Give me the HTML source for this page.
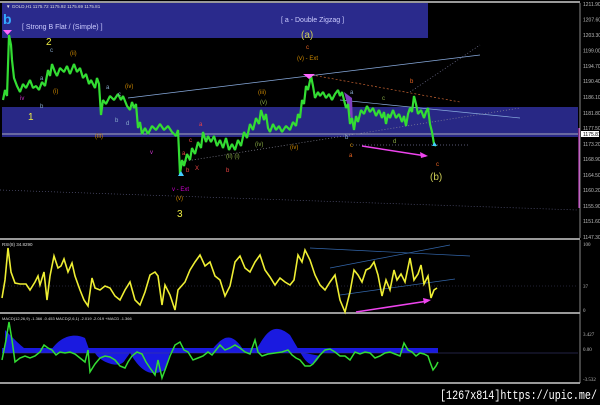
<!DOCTYPE html>
<html><head><meta charset="utf-8"><style>
html,body{margin:0;padding:0;background:#000;width:600px;height:405px;overflow:hidden}
svg{display:block}
text{font-family:"Liberation Sans",sans-serif}
.ax{font-family:"Liberation Serif",serif;font-size:5px;fill:#bbb}
</style></head><body>
<svg width="600" height="405" viewBox="0 0 600 405">
<rect width="600" height="405" fill="#000"/>
<rect x="0" y="1" width="580" height="2" fill="#999"/>
<line x1="580" y1="3" x2="580" y2="238" stroke="#aaa" stroke-width="0.8"/>
<rect x="2" y="3" width="426" height="35" fill="#2a2a8c"/>
<rect x="2" y="107" width="576" height="30" fill="#2a2a8c" opacity="0.95"/>
<line x1="2" y1="134" x2="578" y2="134" stroke="#aab" stroke-width="1"/>
<text x="6" y="8" fill="#ddd" font-size="4.5">▼ GOLD,H1  1175.72 1175.92 1175.69 1175.81</text>
<text x="3" y="24" fill="#3af" font-size="14" font-weight="bold">b</text>
<text x="22" y="29" fill="#ccf" font-size="7">[ Strong B Flat / (Simple) ]</text>
<text x="281" y="22" fill="#ccf" font-size="7">[ a - Double Zigzag ]</text>
<g stroke-width="0.7" fill="none">
<line x1="128" y1="98" x2="480" y2="55" stroke="#8ad"/>
<line x1="312" y1="75" x2="460" y2="102" stroke="#c63" stroke-dasharray="2,2"/>
<line x1="340" y1="100" x2="520" y2="118" stroke="#8ad"/>
<line x1="180" y1="162" x2="520" y2="108" stroke="#889" stroke-dasharray="1,2"/>
<line x1="0" y1="190" x2="578" y2="210" stroke="#557" stroke-dasharray="1,2"/>
<line x1="410" y1="92" x2="480" y2="45" stroke="#779" stroke-dasharray="1,2"/>
<line x1="350" y1="145" x2="470" y2="145" stroke="#779" stroke-dasharray="1,2"/>
</g>
<polygon points="344,92 352,98 353,125" fill="#8040c0"/>
<polyline fill="none" stroke="#3d3" stroke-width="2.2" stroke-linejoin="bevel" points="3,100 5,90 7,96 9,35 11,45 12,60 14,78 17,86 20,92 23,84 26,88 30,80 33,88 36,86 39,90 42,82 45,86 48,70 50,76 52,64 55,72 57,76 60,68 64,72 67,66 70,74 74,64 77,72 80,68 83,78 86,74 89,84 91,80 95,88 97,78 99,84 101,115 103,100 106,104 110,96 114,100 118,94 121,100 123,96 127,106 130,110 132,102 134,108 136,104 138,128 140,122 142,134 145,128 148,134 152,126 156,130 160,124 164,130 168,126 172,132 176,136 178,130 180,174 182,160 184,166 187,154 190,160 192,148 195,154 198,142 201,148 203,132 206,142 208,136 211,142 214,136 217,146 220,140 223,148 226,138 229,150 232,144 235,150 238,140 241,146 244,132 247,138 250,124 253,130 256,118 259,124 261,110 264,120 266,114 268,128 270,132 273,124 276,130 279,126 282,132 286,126 290,130 293,122 296,126 298,114 300,118 302,100 304,104 306,86 308,90 311,76 313,86 315,98 318,92 320,96 323,92 326,98 329,94 332,100 335,94 338,90 340,96 342,92 344,100 346,108 348,104 350,124 352,118 354,130 356,116 358,122 361,110 364,114 367,106 370,112 373,108 376,116 379,110 382,118 384,112 386,124 388,114 390,118 393,110 396,118 399,114 402,122 404,116 406,126 408,114 410,108 412,112 414,96 416,104 418,114 421,110 424,118 426,112 428,108 430,124 432,132 434,144 436,146"/>
<polygon points="432,146 437,146 434.5,142" fill="#4cf"/>
<polygon points="178,176 184,176 181,171" fill="#4cf"/>
<polygon points="303,74 315,74 309,79" fill="#f6f"/>
<polygon points="3,30 12,30 7.5,35" fill="#f6f"/>
<line x1="362" y1="146" x2="426" y2="156" stroke="#e4e" stroke-width="1.5"/>
<polygon points="428,156 420,152 421,158" fill="#e4e"/>
<g font-size="10">
<text x="46" y="45" fill="#ee4">2</text>
<text x="28" y="120" fill="#ee4">1</text>
<text x="177" y="217" fill="#ee4">3</text>
<text x="301" y="38" fill="#cc5">(a)</text>
<text x="430" y="180" fill="#cc5">(b)</text>
</g>
<g font-size="6">
<text x="306" y="49" fill="#e62">c</text>
<text x="297" y="60" fill="#c80">(v) - Ext</text>
<text x="410" y="83" fill="#e62">b</text>
<text x="436" y="166" fill="#e62">c</text>
<text x="349" y="157" fill="#e62">a</text>
<text x="199" y="126" fill="#e44">a</text>
<text x="189" y="142" fill="#e44">c</text>
<text x="182" y="155" fill="#e44">a</text>
<text x="186" y="172" fill="#e44">b</text>
<text x="195" y="170" fill="#e44">X</text>
<text x="226" y="172" fill="#e44">b</text>
<text x="70" y="55" fill="#c80">(ii)</text>
<text x="125" y="88" fill="#c80">(iv)</text>
<text x="95" y="138" fill="#c80">(iii)</text>
<text x="258" y="94" fill="#c80">(iii)</text>
<text x="290" y="149" fill="#c80">(iv)</text>
<text x="176" y="200" fill="#c80">(v)</text>
<text x="172" y="191" fill="#c0c">v - Ext</text>
<text x="53" y="93" fill="#c80">(i)</text>
<text x="50" y="52" fill="#8ac">c</text>
<text x="40" y="80" fill="#8ac">a</text>
<text x="40" y="108" fill="#8ac">b</text>
<text x="115" y="122" fill="#8ac">b</text>
<text x="126" y="125" fill="#8ac">d</text>
<text x="106" y="89" fill="#8ac">a</text>
<text x="118" y="96" fill="#8ac">c</text>
<text x="345" y="139" fill="#8ac">b</text>
<text x="350" y="147" fill="#c80">c</text>
<text x="393" y="143" fill="#8a4">d</text>
<text x="350" y="94" fill="#8ac">a</text>
<text x="382" y="100" fill="#8a4">c</text>
<text x="260" y="104" fill="#8a4">(v)</text>
<text x="255" y="146" fill="#8a4">(iv)</text>
<text x="226" y="158" fill="#8a4">(ii) (i)</text>
<text x="150" y="154" fill="#c3c">v</text>
<text x="20" y="100" fill="#c3c">iv</text>
</g>
<line x1="579" y1="128" x2="579" y2="208" stroke="#e5e" stroke-width="1"/>
<rect x="581" y="131" width="18" height="6" fill="#fff"/>
<g class="ax">
<text x="583" y="6">1211.90</text><text x="583" y="21.5">1207.60</text><text x="583" y="37">1203.30</text><text x="583" y="52.5">1199.00</text><text x="583" y="68">1194.70</text><text x="583" y="83">1190.40</text><text x="583" y="99">1186.10</text><text x="583" y="115">1181.80</text><text x="583" y="130">1177.50</text><text x="583" y="136" fill="#000">1175.81</text><text x="583" y="146">1173.20</text><text x="583" y="161">1168.90</text><text x="583" y="177">1164.50</text><text x="583" y="192">1160.20</text><text x="583" y="208">1155.90</text><text x="583" y="223">1151.60</text><text x="583" y="239">1147.30</text>
</g>
<rect x="0" y="238" width="580" height="2" fill="#999"/>
<rect x="0" y="312" width="580" height="2" fill="#999"/>
<rect x="0" y="382" width="580" height="2" fill="#999"/>
<line x1="580" y1="240" x2="580" y2="383" stroke="#aaa" stroke-width="0.8"/>
<text x="2" y="246" fill="#ddd" font-size="4.5">RSI(8) 34.8290</text>
<line x1="2" y1="286" x2="578" y2="286" stroke="#446" stroke-dasharray="1,2" stroke-width="0.6"/>
<g stroke="#36a" stroke-width="0.7" fill="none">
<line x1="310" y1="248" x2="470" y2="256"/>
<line x1="330" y1="268" x2="450" y2="245"/>
<line x1="340" y1="295" x2="455" y2="279"/>
</g>
<polyline fill="none" stroke="#ee3" stroke-width="1.6" points="2,298 5,280 8,248 11,272 15,283 20,284 26,284 30,290 35,282 38,276 40,285 44,272 47,300 50,276 54,256 58,268 61,266 64,259 68,272 72,263 75,276 80,290 84,300 88,306 92,278 95,288 100,290 105,286 110,288 115,296 120,300 125,290 130,282 135,300 140,305 145,292 150,275 155,272 158,276 162,305 165,285 170,295 175,310 178,290 185,282 190,270 195,262 200,255 205,266 210,262 215,276 220,280 225,296 230,286 235,262 240,256 245,268 250,272 255,262 260,255 265,270 270,277 275,285 280,278 285,282 290,285 294,280 298,255 302,262 305,250 310,260 315,275 320,285 325,290 330,282 335,275 340,300 345,312 350,292 354,270 358,275 362,282 366,270 370,268 374,262 378,275 382,296 386,280 390,290 394,270 397,280 401,274 405,282 410,258 414,280 418,274 421,265 424,284 428,276 431,298 434,290 437,288"/>
<line x1="356" y1="312" x2="428" y2="301" stroke="#e4e" stroke-width="1.5"/>
<polygon points="431,300 423,298 424,304" fill="#e4e"/>
<text x="583" y="246" class="ax">100</text>
<text x="583" y="288" class="ax">37</text>
<text x="583" y="312" class="ax">0</text>
<text x="2" y="320" fill="#ddd" font-size="4">MACD(12,26,9) -1.366 -0.453  MACD(2,6,1) -2.019 -2.019  +MACD -1.366</text>
<rect x="2" y="348" width="436" height="5" fill="#1a1ae0"/>
<path d="M5,330 C15,340 25,350 30,352 L30,353 L5,353Z M50,352 C60,335 75,333 85,338 L90,352Z M95,353 C100,362 120,370 125,360 L130,353Z M130,353 C140,370 150,378 165,370 L170,353Z M210,352 C220,340 228,330 240,345 L245,352Z M255,352 C265,335 272,320 290,335 L300,352Z M300,352 C310,370 315,365 320,356Z" fill="#1a1ae0"/>
<line x1="2" y1="353" x2="578" y2="353" stroke="#448" stroke-width="0.6"/>
<polyline fill="none" stroke="#3d3" stroke-width="1.5" points="2,360 6,340 9,322 12,340 15,362 20,358 25,356 30,358 35,356 40,352 44,345 48,348 52,350 56,355 60,352 65,353 70,352 75,354 80,358 85,362 88,350 90,372 95,364 100,358 105,356 110,357 115,360 120,366 125,368 128,362 132,356 137,352 142,354 146,362 150,368 155,375 158,360 162,378 165,370 170,356 175,345 180,342 184,350 188,352 193,360 198,358 203,356 208,352 212,355 216,350 220,345 225,350 230,348 235,345 240,348 245,352 250,354 255,340 258,352 262,356 268,354 275,353 282,352 288,350 292,355 296,358 300,360 305,366 310,366 313,364 316,360 320,355 325,350 330,349 335,352 340,356 345,356 350,360 355,352 360,354 365,352 370,353 375,358 380,356 385,353 390,352 395,354 400,356 404,343 408,350 412,352 416,356 420,353 424,354 428,356 430,362 433,370 436,366 438,362"/>
<text x="583" y="336" class="ax">3.427</text>
<text x="583" y="351" class="ax">0.00</text>
<text x="583" y="381" class="ax">-3.532</text>
<text x="440" y="399" fill="#fff" font-size="13" textLength="157" lengthAdjust="spacingAndGlyphs" style="font-family:'Liberation Mono',monospace">[1267x814]https://upic.me/</text>
</svg>
</body></html>
